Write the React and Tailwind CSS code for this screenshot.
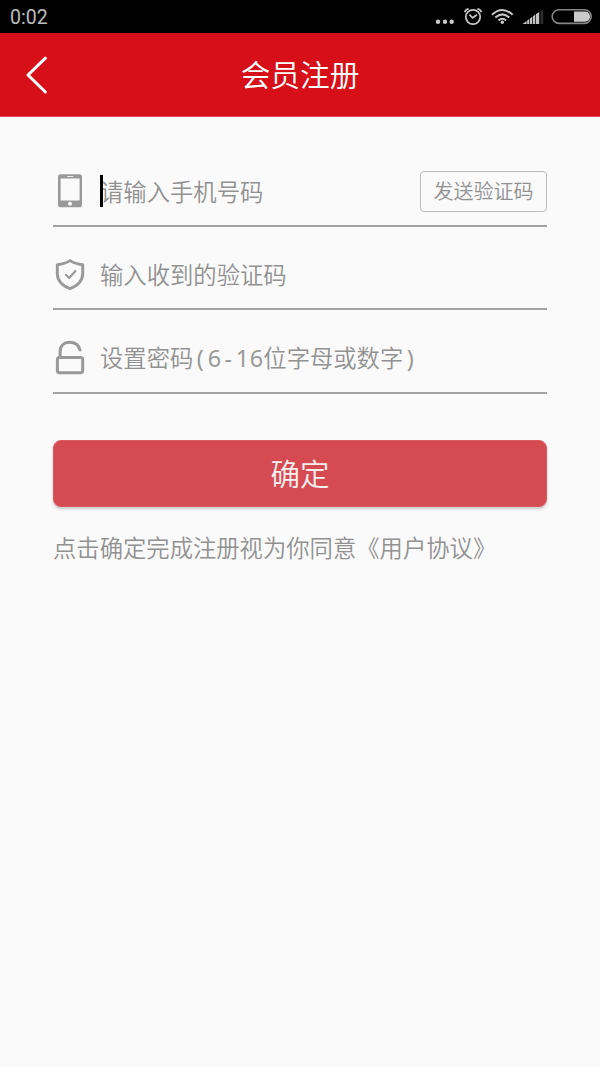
import React from "react";

function StatusBar() {
  return (
    <div className="flex h-[33px] items-center justify-between bg-black pl-[10px] pr-[8px] text-[#bdbdbd]">
      <span className="pt-[2px] font-[Roboto] text-[19.5px] leading-[33px] font-normal">0:02</span>
      <svg width="158" height="33" viewBox="434 0 158 33" fill="none">
        <g fill="#cacaca">
          <circle cx="438" cy="21.7" r="2.2" />
          <circle cx="445" cy="21.7" r="2.2" />
          <circle cx="451.7" cy="21.7" r="2.2" />
        </g>
        <g stroke="#c8c8c8" strokeWidth="1.7">
          <circle cx="473" cy="17" r="7.2" />
          <path d="M469.4 14.6L472.6 17.8L477 14.8" />
          <path d="M464.6 12.2Q465.7 9.3 468.6 8.6M477.4 8.6Q480.3 9.3 481.4 12.2" strokeWidth="1.9" />
        </g>
        <g stroke="#c8c8c8" strokeWidth="2">
          <path d="M492 14.8Q502.3 5.2 512.6 14.8" />
          <path d="M495.3 17.6Q502.3 11.1 509.3 17.6" />
          <path d="M498.5 20.4Q502.3 17 506.1 20.4" />
        </g>
        <circle cx="502.3" cy="22.3" r="1.7" fill="#c8c8c8" />
        <g fill="#c4c4c4">
          <path d="M522.5 24L526.6 21V24Z" />
          <path d="M527.2 24V20.5L529.3 18.9V24Z" />
          <path d="M530 24V18.4L532.2 16.8V24Z" />
          <path d="M532.9 24V16.3L535.3 14.6V24Z" />
          <path d="M536 24V14L539.2 11.9V24Z" />
        </g>
        <path d="M540.6 24V11.2L543.2 9.7V24Z" fill="#2e2e2e" />
        <rect x="552.2" y="9.8" width="39" height="13.6" rx="6.8" stroke="#858585" strokeWidth="1.6" />
        <path d="M574 11.5H585A5.1 5.1 0 0 1 585 21.7H574Z" fill="#cacaca" />
      </svg>
    </div>
  );
}

function Header() {
  return (
    <header className="grid h-[84px] grid-cols-[100px_1fr_100px] items-center border-b border-[#e04a53] bg-[#d60f19]">
      <svg className="ml-[24px]" width="26" height="42" viewBox="24 54 26 42" fill="none" stroke="#fff" strokeWidth="3" strokeLinecap="round" strokeLinejoin="round">
        <path d="M45.4 58.2L28 75L45.4 92" />
      </svg>
      <h1 className="pb-[2px] text-center text-[29.7px] leading-[40px] text-white">会员注册</h1>
    </header>
  );
}

function PhoneIcon() {
  return (
    <svg width="34" height="40" viewBox="53 171 34 40">
      <path fillRule="evenodd" fill="#999" d="M60.5 174.3H79.5Q82 174.3 82 176.8V204.8Q82 207.3 79.5 207.3H60.5Q58 207.3 58 204.8V176.8Q58 174.3 60.5 174.3ZM60.6 178.4V200.6H79.6V178.4Z" />
      <rect x="67" y="176" width="6.4" height="1" rx=".5" fill="#eee" />
      <circle cx="70" cy="203.8" r="2" fill="#fafafa" />
    </svg>
  );
}

function ShieldIcon() {
  return (
    <svg width="34" height="40" viewBox="53 254 34 40" fill="none" stroke="#999" strokeLinejoin="round">
      <path strokeWidth="2.9" d="M70 260.6Q75 263.9 82.7 264.7V273.5C82.7 280.5 77.2 285.8 70 288.7C62.8 285.8 57.3 280.5 57.3 273.5V264.7Q65 263.9 70 260.6Z" />
      <path strokeWidth="2.2" strokeLinecap="round" d="M65.9 274.8L69.2 278L75.4 271" />
    </svg>
  );
}

function LockIcon() {
  return (
    <svg width="34" height="40" viewBox="53 338 34 40" fill="none" stroke="#999" strokeWidth="3" strokeLinecap="round">
      <rect x="57.4" y="357.5" width="25.3" height="15.2" rx="2.2" />
      <path d="M60.1 357V352C60.1 346 64 342.3 69.6 342.3C74.8 342.3 78.8 345.2 80 350" />
    </svg>
  );
}

function Field({ icon, children, action, rowClass }) {
  return (
    <div className={"flex items-center border-b-2 border-[#a3a3a3] " + rowClass}>
      {icon}
      <div className="ml-[13px] flex-1 whitespace-nowrap text-[23.33px] leading-[34px] text-[#919191]">{children}</div>
      {action}
    </div>
  );
}

// Sets Latin characters on a fixed 14px advance.
function Mono({ text }) {
  return (
    <span className="font-['Noto_Sans'] font-normal text-[#999]">
      {text.split("").map((char, i) => (
        <span key={i} className="inline-block w-[14px] text-center">{char}</span>
      ))}
    </span>
  );
}

export default function App() {
  return (
    <div lang="zh-CN" className="min-h-[1067px] w-[600px] bg-[#fafafa] font-['Noto_Sans_CJK_SC',sans-serif] font-[350]">
      <StatusBar />
      <Header />
      <main className="px-[53px] pt-[38px]">
        <Field
          rowClass="h-[72px] pt-[2px]"
          icon={<PhoneIcon />}
          action={
            <button className="h-[41px] w-[127px] rounded-[4px] border border-[#bcbcbc] text-[20px] leading-[38px] text-[#919191]">
              发送验证码
            </button>
          }
        >
          <span className="relative">
            <span className="absolute left-0 top-px h-[32px] w-[3px] bg-black" />
            请输入手机号码
          </span>
        </Field>
        <Field rowClass="h-[83px] pt-[13px]" icon={<ShieldIcon />}>输入收到的验证码</Field>
        <Field rowClass="h-[84px] pt-[13px]" icon={<LockIcon />}>
          设置密码<Mono text="(6-16" />位字母或数字<Mono text=")" />
        </Field>
        <button className="mt-[46px] block h-[67px] w-full rounded-[8px] border border-[#dc5b63] bg-[#d64a51] pb-[2px] text-[29.5px] leading-[63px] text-[#f7eeee] shadow-[0_2px_3px_rgba(0,0,0,0.2)]">
          确定
        </button>
        <p className="mt-[23px] whitespace-nowrap text-[23.33px] leading-[34px] text-[#919191]">
          点击确定完成注册视为你同意《用户协议》
        </p>
      </main>
    </div>
  );
}
